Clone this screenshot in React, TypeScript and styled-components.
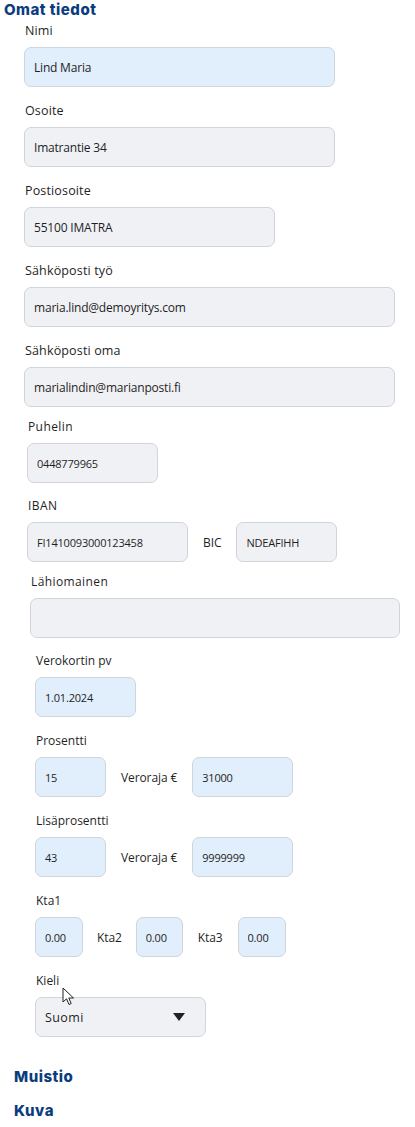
import styled, { createGlobalStyle } from "styled-components";

const GlobalStyle = createGlobalStyle`
    body {
        margin: 0;
        background: #fff;
        font-family: "Open Sans", "Noto Sans", sans-serif;
        color: #1f1f1f;
    }
`;

type Tone = "blue" | "gray";

const App = () => (
    <>
        <GlobalStyle />
        <Page>
            <SectionTitle>Omat tiedot</SectionTitle>

            <Group $indent={24}>
                <Field $mt={3}>
                    <Label $size={12.5} $spacing={0.15}>Nimi</Label>
                    <TextBox $w={311} $tone="blue" defaultValue="Lind Maria" />
                </Field>
                <Field>
                    <Label $size={12.5} $spacing={0.15}>Osoite</Label>
                    <TextBox $w={311} defaultValue="Imatrantie 34" />
                </Field>
                <Field>
                    <Label $size={12.5} $spacing={0.15}>Postiosoite</Label>
                    <TextBox $w={251} defaultValue="55100 IMATRA" />
                </Field>
                <Field>
                    <Label $size={12.5} $spacing={0.15}>Sähköposti työ</Label>
                    <TextBox $w={371} defaultValue="maria.lind@demoyritys.com" />
                </Field>
                <Field>
                    <Label $size={12.5} $spacing={0.15}>Sähköposti oma</Label>
                    <TextBox $w={371} defaultValue="marialindin@marianposti.fi" />
                </Field>
            </Group>

            <Group $indent={27}>
                <Field $mt={12}>
                    <Label>Puhelin</Label>
                    <TextBox $w={131} $fs={11} defaultValue="0448779965" />
                </Field>
                <Field $mt={15}>
                    <Label>IBAN</Label>
                    <Row>
                        <TextBox $w={161} $fs={11} defaultValue="FI1410093000123458" />
                        <InlineLabel>BIC</InlineLabel>
                        <TextBox $w={101} $fs={11} defaultValue="NDEAFIHH" />
                    </Row>
                </Field>
                <Group $indent={3}>
                    <Field $mt={12}>
                        <Label>Lähiomainen</Label>
                        <TextBox $w={370} defaultValue="" />
                    </Field>
                </Group>
            </Group>

            <Group $indent={35}>
                <Field $mt={15}>
                    <Label $spacing={0}>Verokortin pv</Label>
                    <TextBox $w={101} $tone="blue" $fs={11} defaultValue="1.01.2024" />
                </Field>
                <Field>
                    <Label $spacing={0}>Prosentti</Label>
                    <Row>
                        <TextBox $w={71} $tone="blue" $fs={11} defaultValue="15" />
                        <InlineLabel>Veroraja €</InlineLabel>
                        <TextBox $w={101} $tone="blue" $fs={11} defaultValue="31000" />
                    </Row>
                </Field>
                <Field>
                    <Label $spacing={0}>Lisäprosentti</Label>
                    <Row>
                        <TextBox $w={71} $tone="blue" $fs={11} defaultValue="43" />
                        <InlineLabel>Veroraja €</InlineLabel>
                        <TextBox $w={101} $tone="blue" $fs={11} defaultValue="9999999" />
                    </Row>
                </Field>
                <Field>
                    <Label $spacing={0}>Kta1</Label>
                    <Row>
                        <TextBox $w={48} $tone="blue" $fs={11} defaultValue="0.00" />
                        <InlineLabel $gap={14}>Kta2</InlineLabel>
                        <TextBox $w={47} $tone="blue" $fs={11} defaultValue="0.00" />
                        <InlineLabel $gap={15}>Kta3</InlineLabel>
                        <TextBox $w={48} $tone="blue" $fs={11} defaultValue="0.00" />
                    </Row>
                </Field>
                <Field>
                    <Label $spacing={0}>Kieli</Label>
                    <Cursor width="13" height="19" viewBox="0 0 13 19">
                        <path d="M1 1 L1 15 L4.5 11.8 L7 17.5 L9.2 16.5 L6.8 11 L11.5 11 Z" fill="#fff" stroke="#222" strokeWidth="1" strokeLinejoin="round" />
                    </Cursor>
                    <SelectBox>
                        <span>Suomi</span>
                        <svg width="12" height="8" viewBox="0 0 12 8">
                            <path d="M0 0 H12 L6 8 Z" fill="#222" />
                        </svg>
                    </SelectBox>
                </Field>
            </Group>

            <Accordion $first>Muistio</Accordion>
            <Accordion>Kuva</Accordion>
        </Page>
    </>
);

export default App;

const Page = styled.div`
    position: relative;
    width: 415px;
    padding-bottom: 10px;
`;

const SectionTitle = styled.h2`
    margin: 0 0 0 4px;
    font-family: "Inter", "Lato", sans-serif;
    font-weight: 800;
    font-size: 15px;
    letter-spacing: 0.5px;
    line-height: 20px;
    color: #0b3d7e;
`;

const Accordion = styled.h3<{ $first?: boolean }>`
    margin: ${p => (p.$first ? "30px" : "14px")} 0 0 14px;
    font-family: "Inter", "Lato", sans-serif;
    font-weight: 800;
    font-size: 15px;
    letter-spacing: 0.5px;
    line-height: 20px;
    color: #0b3d7e;
`;

const Group = styled.div<{ $indent: number }>`
    padding-left: ${p => p.$indent}px;
`;

const Field = styled.div<{ $mt?: number }>`
    position: relative;
    display: flex;
    flex-direction: column;
    align-items: flex-start;
    margin-top: ${p => p.$mt ?? 16}px;
`;

const Label = styled.label<{ $size?: number; $spacing?: number }>`
    display: block;
    font-size: ${p => p.$size ?? 12}px;
    letter-spacing: ${p => p.$spacing ?? 0.4}px;
    line-height: 16px;
    margin: 0 0 8px 1px;
    color: #1f1f1f;
`;

const Row = styled.div`
    display: flex;
    align-items: center;
`;

const InlineLabel = styled.span<{ $gap?: number }>`
    margin: 0 ${p => p.$gap ?? 15}px;
    font-size: 12px;
    letter-spacing: -0.1px;
    color: #1f1f1f;
`;

const TextBox = styled.input<{ $w: number; $tone?: Tone; $fs?: number }>`
    box-sizing: border-box;
    width: ${p => p.$w}px;
    height: 40px;
    padding: 0 9px;
    border: 1px solid #d0d5dd;
    border-radius: 7px;
    background: ${p => (p.$tone === "blue" ? "#e1eefb" : "#f0f1f5")};
    font-family: "Open Sans", "Noto Sans", sans-serif;
    font-size: ${p => p.$fs ?? 12}px;
    letter-spacing: -0.2px;
    color: #1f1f1f;
    outline: none;
`;

const SelectBox = styled.div`
    box-sizing: border-box;
    width: 171px;
    height: 40px;
    padding: 0 20px 0 9px;
    display: flex;
    align-items: center;
    justify-content: space-between;
    border: 1px solid #d0d5dd;
    border-radius: 7px;
    background: #f0f1f5;
    font-size: 12.5px;
    letter-spacing: 0.4px;
    color: #1f1f1f;
`;

const Cursor = styled.svg`
    position: absolute;
    left: 27px;
    top: 14px;
    z-index: 2;
`;
